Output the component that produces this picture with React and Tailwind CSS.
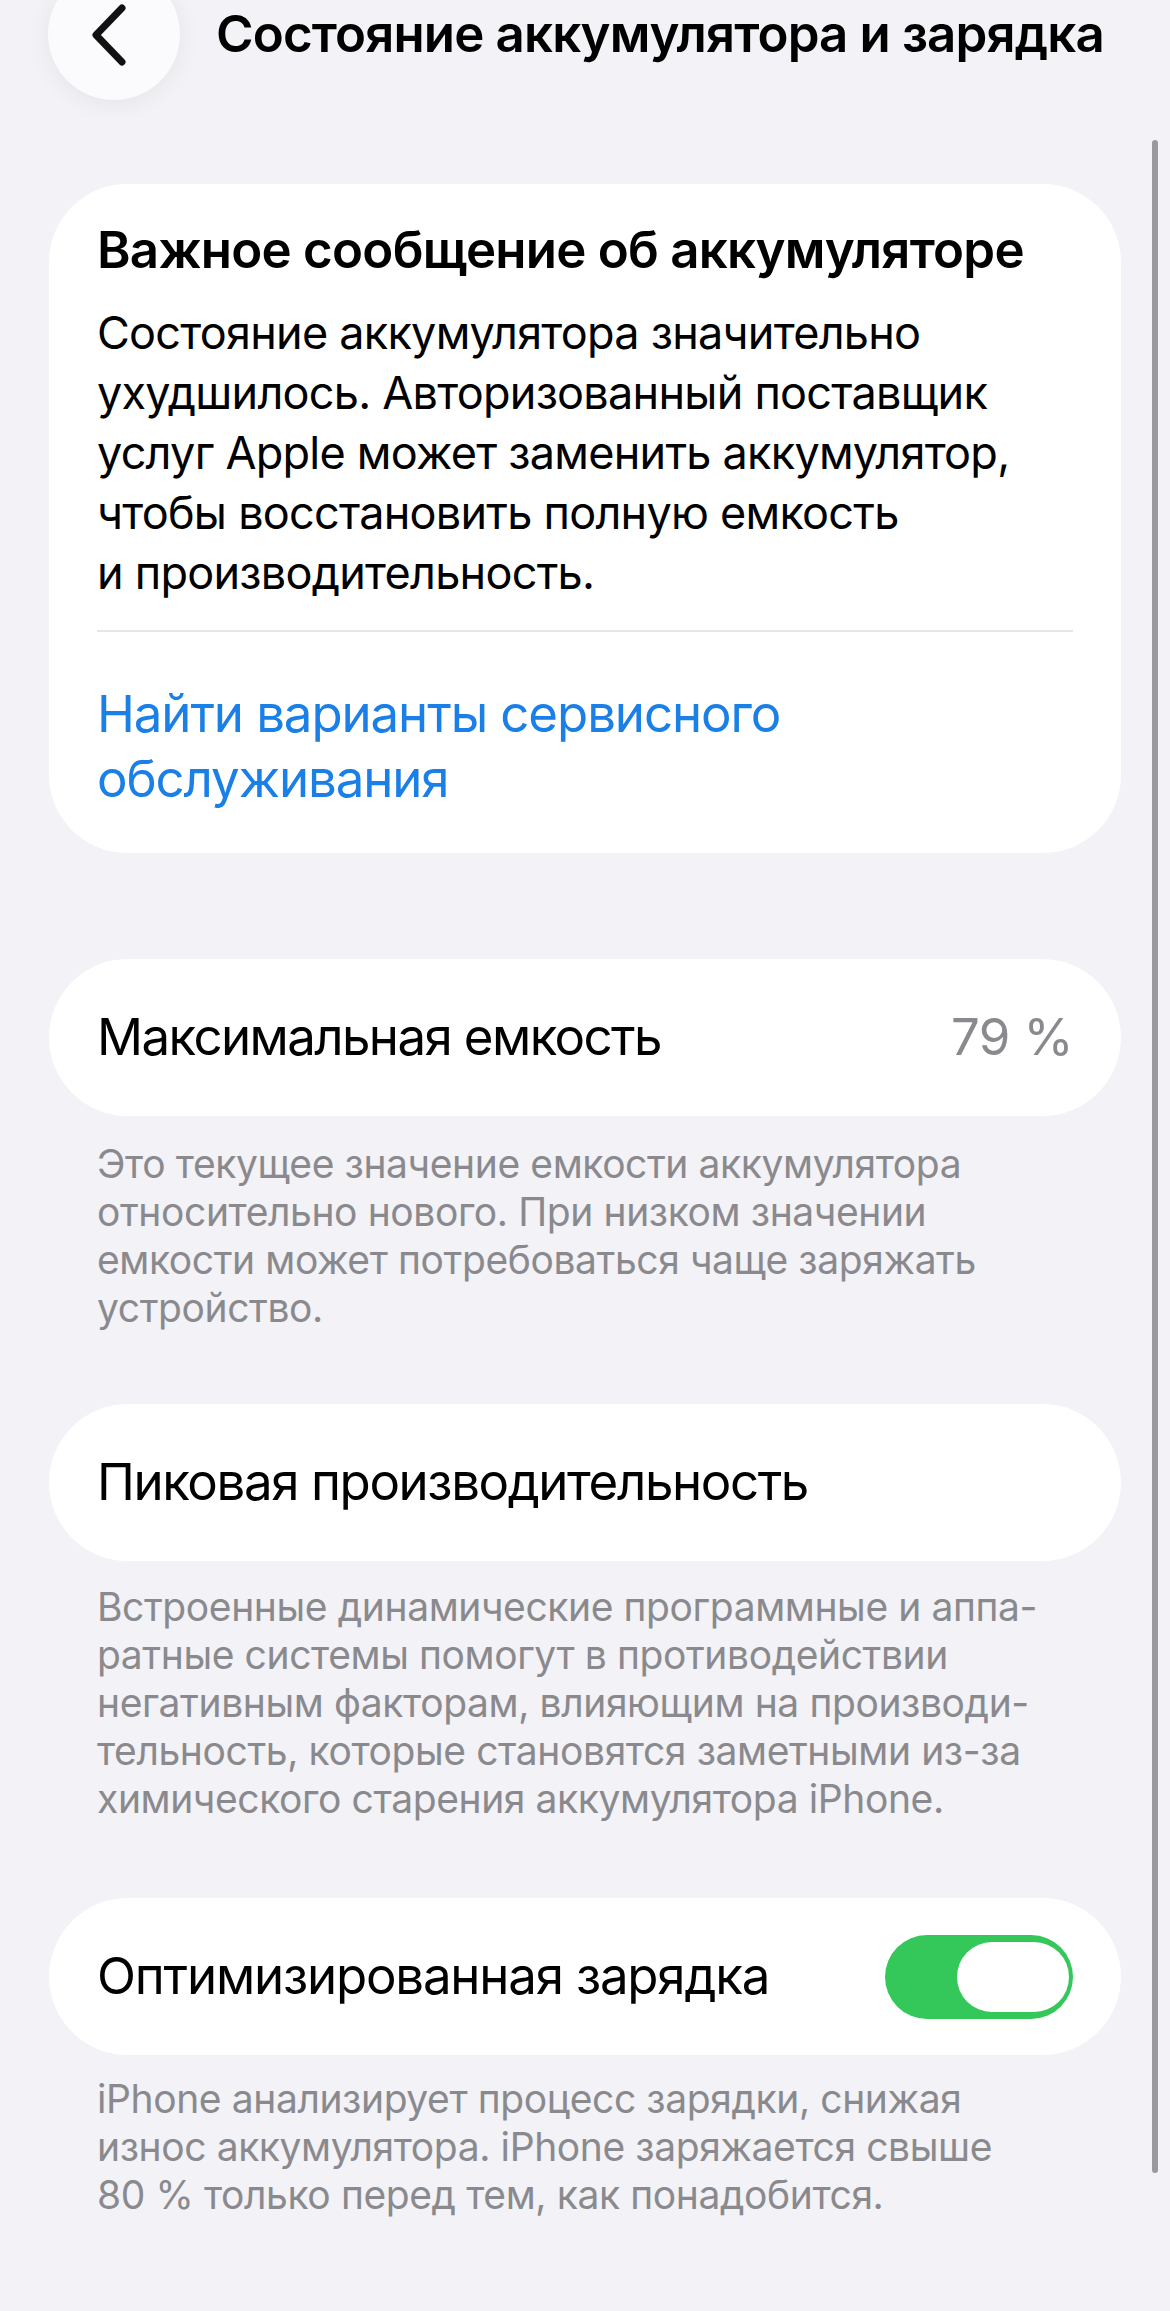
import React from "react";

const Lines = ({ lines, className }) => (
  <div className={className}>
    {lines.map((l, i) => (
      <div key={i} className="whitespace-nowrap">
        {l}
      </div>
    ))}
  </div>
);

const Caption = ({ lines, className = "" }) => (
  <Lines
    lines={lines}
    className={`px-[48px] text-[39px] leading-[48px] text-[#8a8a8e] tracking-[-0.4px] ${className}`}
  />
);

const Row = ({ children, className = "" }) => (
  <div
    className={`flex h-[157px] items-center justify-between rounded-[79px] bg-white pl-[48px] pr-[48px] ${className}`}
  >
    {children}
  </div>
);

export default function App() {
  return (
    <div
      className="relative min-h-[2311px] w-full overflow-hidden bg-[#f2f2f7] text-black"
      style={{ fontFamily: "Inter, 'Noto Sans', sans-serif" }}
    >
      {/* Header */}
      <header className="-mt-[32px] flex h-[132px] items-center pl-[48px]">
        <div className="flex h-[132px] w-[132px] items-center justify-center rounded-full bg-[#fbfbfd] shadow-[0_4px_24px_rgba(0,0,0,0.06)]">
          <svg
            width="40"
            height="64"
            viewBox="0 0 40 64"
            className="-ml-[8px] mt-[2px]"
            fill="none"
          >
            <path
              d="M32 5 L6 32 L32 59"
              stroke="#111"
              strokeWidth="7"
              strokeLinecap="round"
              strokeLinejoin="round"
            />
          </svg>
        </div>
        <h1 className="ml-[36px] whitespace-nowrap text-[51px] font-semibold leading-[66px] tracking-[-0.85px]">
          Состояние аккумулятора и зарядка
        </h1>
      </header>

      <main className="mt-[84px] px-[49px]">
        {/* Important message card */}
        <section className="rounded-[78px] bg-white px-[48px] pt-[33px] pb-[42px]">
          <h2 className="whitespace-nowrap text-[51px] font-semibold leading-[66px] tracking-[-0.75px]">
            Важное сообщение об аккумуляторе
          </h2>
          <Lines
            className="mt-[20px] text-[45px] leading-[60px] tracking-[-0.75px]"
            lines={[
              "Состояние аккумулятора значительно",
              "ухудшилось. Авторизованный поставщик",
              "услуг Apple может заменить аккумулятор,",
              "чтобы восстановить полную емкость",
              "и производительность.",
            ]}
          />
          <div className="mt-[27px] h-[2px] bg-[#e5e5ea]" />
          <Lines
            className="mt-[49px] text-[51px] leading-[65px] text-[#1a7fe6] tracking-[-1.1px]"
            lines={["Найти варианты сервисного", "обслуживания"]}
          />
        </section>

        {/* Max capacity */}
        <Row className="mt-[106px]">
          <span className="whitespace-nowrap text-[51px] tracking-[-1.6px]">
            Максимальная емкость
          </span>
          <span className="whitespace-nowrap text-[51px] tracking-[-0.6px] text-[#8a8a8e]">
            79 %
          </span>
        </Row>
        <Caption
          className="mt-[24px]"
          lines={[
            "Это текущее значение емкости аккумулятора",
            "относительно нового. При низком значении",
            "емкости может потребоваться чаще заряжать",
            "устройство.",
          ]}
        />

        {/* Peak performance */}
        <Row className="mt-[72px]">
          <span className="whitespace-nowrap text-[51px] tracking-[-1.4px]">
            Пиковая производительность
          </span>
        </Row>
        <Caption
          className="mt-[22px]"
          lines={[
            "Встроенные динамические программные и аппа-",
            "ратные системы помогут в противодействии",
            "негативным факторам, влияющим на производи-",
            "тельность, которые становятся заметными из-за",
            "химического старения аккумулятора iPhone.",
          ]}
        />

        {/* Optimized charging */}
        <Row className="mt-[75px]">
          <span className="whitespace-nowrap text-[51px] tracking-[-1.2px]">
            Оптимизированная зарядка
          </span>
          <div className="relative h-[84px] w-[188px] rounded-full bg-[#34c759]">
            <div className="absolute right-[4px] top-[7px] h-[70px] w-[112px] rounded-full bg-white" />
          </div>
        </Row>
        <Caption
          className="mt-[20px]"
          lines={[
            "iPhone анализирует процесс зарядки, снижая",
            "износ аккумулятора. iPhone заряжается свыше",
            "80 % только перед тем, как понадобится.",
          ]}
        />
      </main>

      {/* Scroll indicator */}
      <div className="absolute right-[12px] top-[140px] h-[2033px] w-[6px] rounded-full bg-[#9a9a9e]" />
    </div>
  );
}
